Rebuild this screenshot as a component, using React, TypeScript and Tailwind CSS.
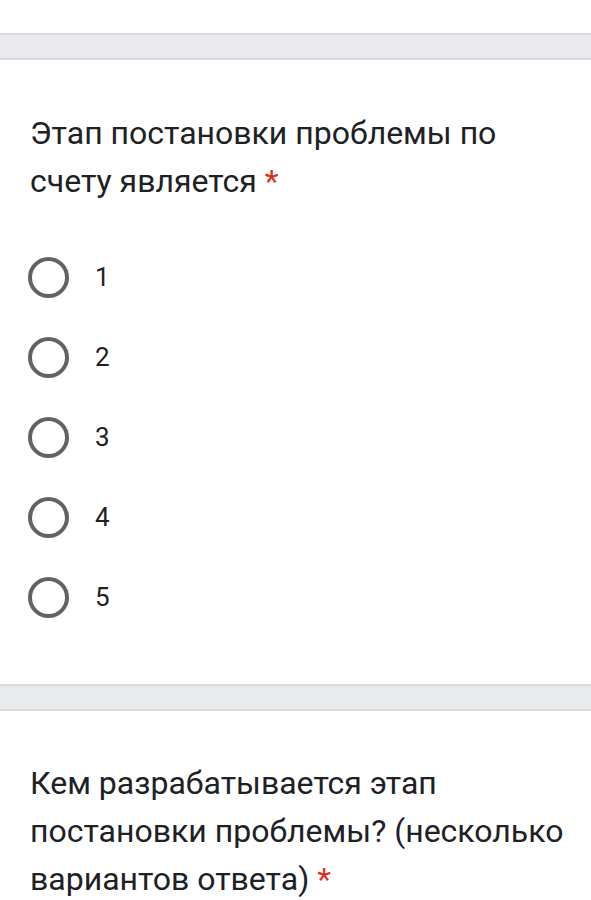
import React from "react";

const Radio = ({ label }: { label: string }) => (
  <div className="flex h-[80px] items-center">
    <div className="ml-[28px] h-[41px] w-[41px] rounded-full border-[4.5px] border-[#5f6368]" />
    <span className="ml-[26px] text-[26px] font-normal leading-none text-[#202124]">{label}</span>
  </div>
);

const Band = () => (
  <div className="h-[27px] border-y-2 border-[#d7d9dc] bg-[#e8eaed]" />
);

export default function App() {
  return (
    <div
      className="w-[591px] min-h-[900px] bg-white"
      style={{ fontFamily: "Roboto, 'Noto Sans', sans-serif" }}
    >
      <div className="h-[33px] bg-white" />
      <Band />
      <div className="pt-[49px] pb-[47px]">
        <div className="pl-[30px] pr-[20px] text-[32px] font-normal leading-[48px] text-[#202124]">
          Этап постановки проблемы по счету является <span className="text-[#d93025]">*</span>
        </div>
        <div className="mt-[32px]">
          {["1", "2", "3", "4", "5"].map((l) => (
            <Radio key={l} label={l} />
          ))}
        </div>
      </div>
      <Band />
      <div className="pt-[48px] pb-[48px]">
        <div className="pl-[30px] pr-[20px] text-[32px] font-normal leading-[48px] text-[#202124]">
          Кем разрабатывается этап постановки проблемы? (несколько вариантов ответа){" "}
          <span className="text-[#d93025]">*</span>
        </div>
      </div>
    </div>
  );
}
